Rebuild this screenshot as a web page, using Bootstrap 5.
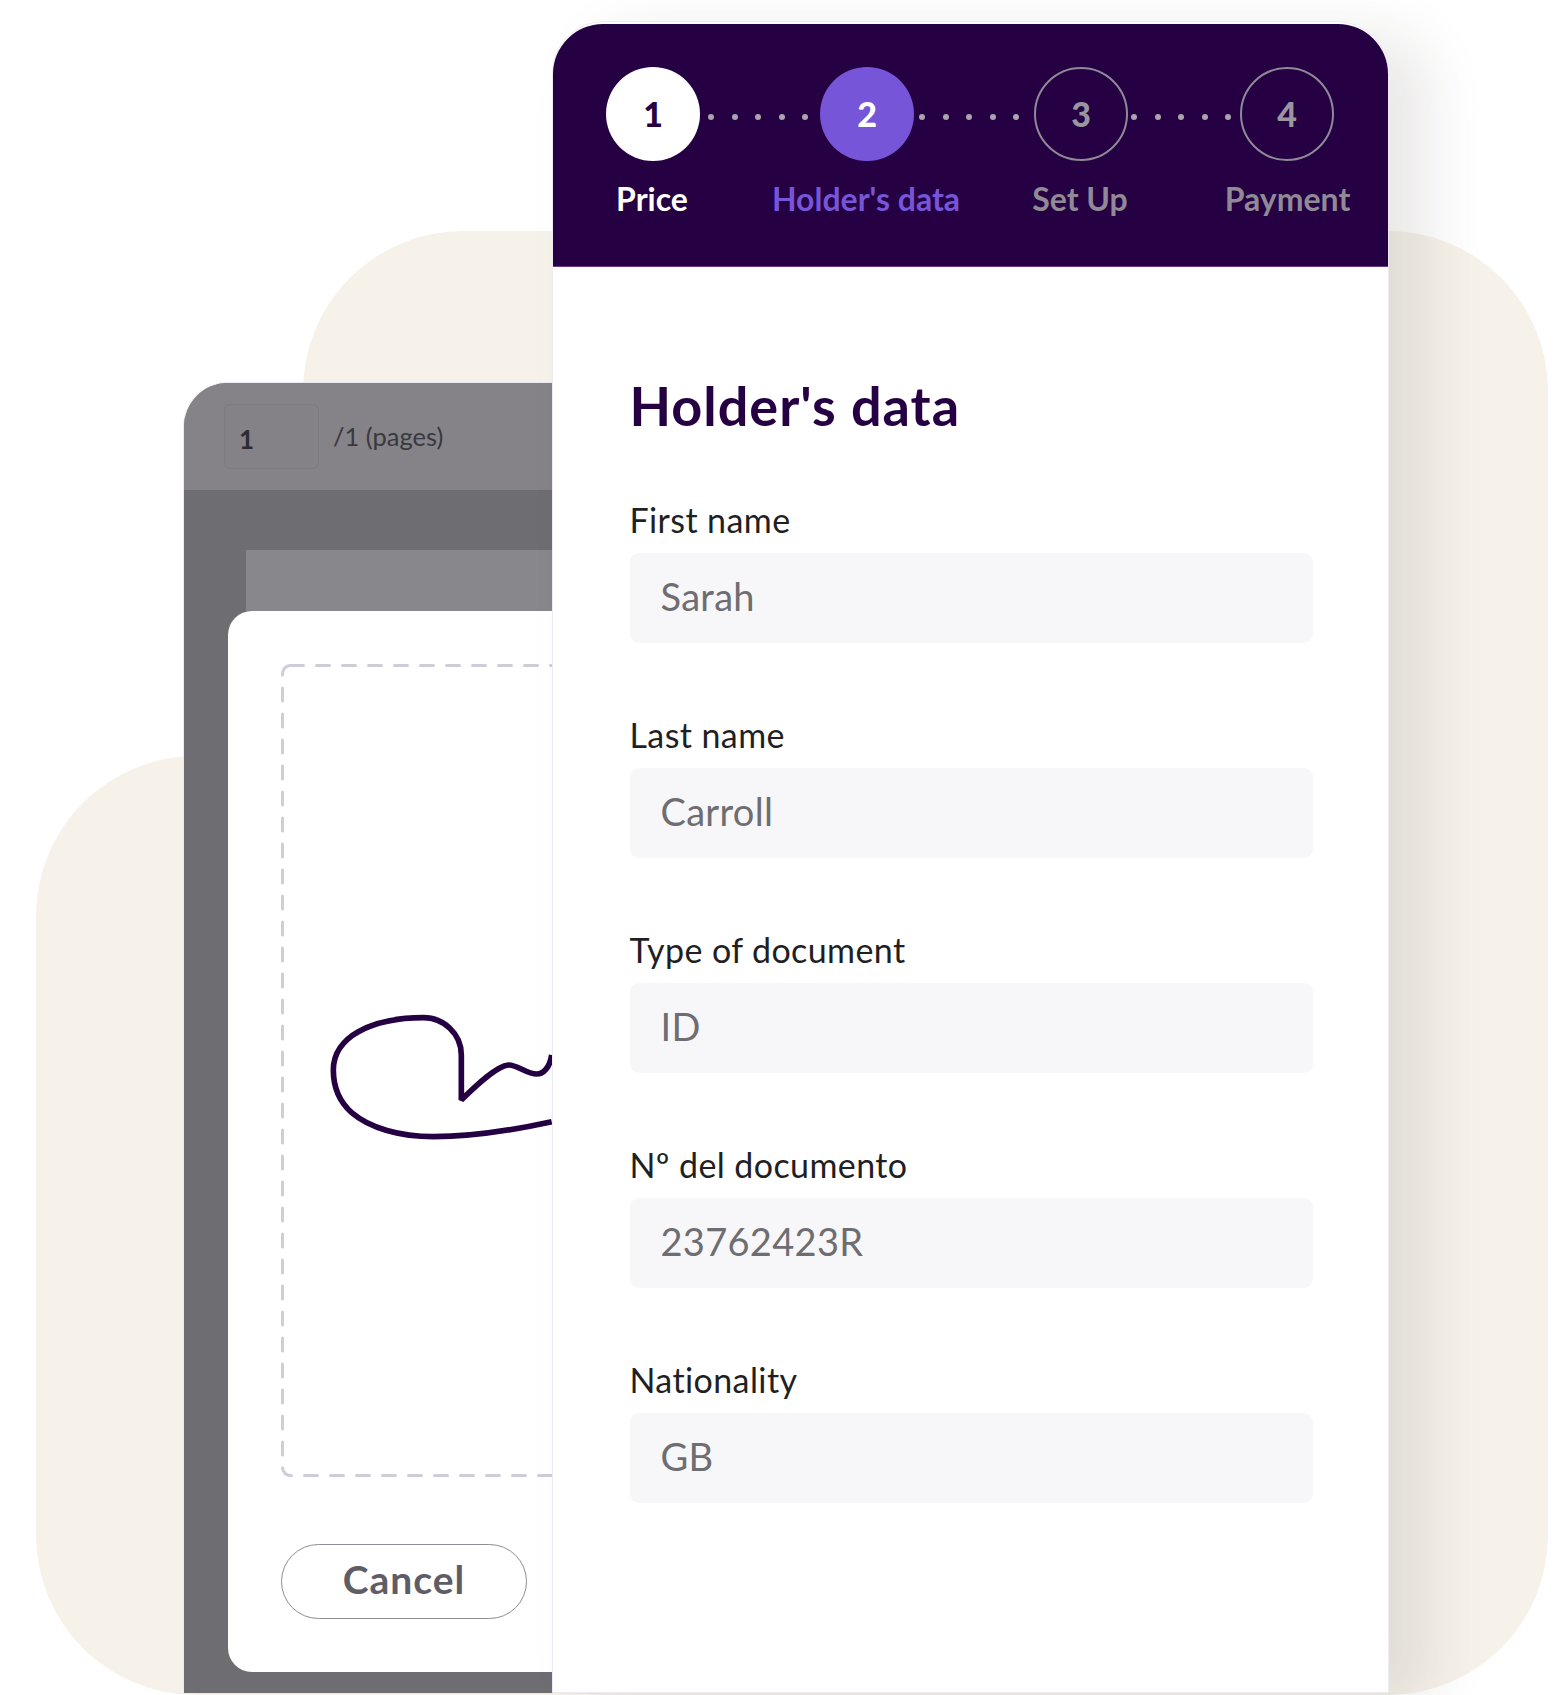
<!DOCTYPE html>
<html lang="en">
<head>
<meta charset="utf-8">
<title>Holder's data</title>
<link href="https://cdn.jsdelivr.net/npm/bootstrap@5.3.0/dist/css/bootstrap.min.css" rel="stylesheet">
<style>
html,body{margin:0;background:#fff}
body{font-family:"Lato","Liberation Sans",sans-serif;font-variant-ligatures:none}
.stage{position:relative;width:1560px;height:1695px;overflow:hidden;background:#fff}
.blob{position:absolute;background:#f6f2ea}
.blob-back{left:303px;top:231px;width:1245px;height:1464px;border-radius:160px}
.blob-low{left:36px;top:756px;width:500px;height:939px;border-radius:160px 0 0 160px}
.doc-panel{position:absolute;left:184px;top:382.5px;width:420px;height:1310.5px;border-radius:44px 0 0 0;overflow:hidden;background:#6e6d72;box-shadow:0 0 0 1px #ecebf3}
.doc-tools{height:107.5px;background:#858388;padding:21.5px 0 0 40px;gap:14px}
.page-box{width:95px;height:65px;background:#848287;border:1.5px solid #7d7b80;border-radius:6px;padding:0 0 0 14px;font-weight:700;font-size:26px;color:#2e2c33;line-height:68px}
.page-count{font-size:25.5px;color:#3a383f;line-height:64px}
.sheet{height:61px;margin:60px 0 0 62px;background:#88878c}
.sign-modal{margin-left:43.5px;width:500px;height:1061px;background:#fff;border-radius:24px 0 0 24px;padding:53px 0 0 53.5px}
.sign-area{display:block;width:320px;height:815px}
.btn-cancel{width:246px;height:75px;margin-top:65px;border:1.5px solid #8e8d94;border-radius:38px;background:#fff;color:#5e5d66;font-weight:700;font-size:39px;letter-spacing:1px;line-height:1;padding:0 0 4px}
.form-panel{position:absolute;left:552px;top:21px;width:837px;height:1672px;border:1.5px solid #ecebf3;border-radius:52px 52px 0 0;background:#fff;padding-top:1.5px;box-shadow:38px 14px 60px rgba(50,40,30,.105)}
.form-panel .card-header{height:243px;background:#250042;border:0;border-bottom:1px solid #6b3b8a;border-radius:50px 50px 0 0;padding:43px 0 0 53px}
.step-dot{width:94px;height:94px;flex:none;border-radius:50%;font-weight:900;font-size:34px;line-height:1}
.step-done{background:#fff;color:#250042}
.step-now{background:#7655d9;color:#fff}
.step-next{border:2px solid #8f8a96;color:#9a95a0}
.link-dots{flex:none;width:120px;padding:6px 0 0 8px;gap:17.6px}
.link-dots-mid{padding-left:5px}
.link-dots-short{width:112px;padding-left:3px}
.link-dots i{display:block;width:6px;height:6px;border-radius:50%;background:#a9a4b0}
.step-labels{display:grid;grid-template-columns:198px 230px 198px 217px;margin:18px 0 0 -53px;font-weight:700;font-size:32px;line-height:40px;text-align:center}
.lbl-done{color:#fff}.lbl-now{color:#7655d9}.lbl-next{color:#8f8a96}
.form-panel .card-body{padding:103px 0 0 76.5px}
.form-title{margin:0;font-weight:700;font-size:54px;letter-spacing:1px;line-height:72px;color:#250042}
.field{height:215px;width:683px}
.field-first{margin-top:55px}
.field-label{display:block;margin:0;font-size:34px;letter-spacing:.4px;line-height:46px;color:#1f1f24;height:56px}
.field .form-control{height:90px;margin:0;background:#f7f7f9;border:0;border-radius:9px;padding:0 0 0 31px;font-size:38px;letter-spacing:.3px;line-height:86px;color:#6e6d72}
</style>
</head>
<body>
<div class="stage">
  <div class="blob blob-back"></div>
  <div class="blob blob-low"></div>

  <div class="doc-panel d-flex flex-column">
    <div class="doc-tools d-flex align-items-start">
      <div class="page-box">1</div>
      <div class="page-count">/1 (pages)</div>
    </div>
    <div class="sheet"></div>
    <div class="sign-modal">
      <svg class="sign-area" viewBox="281 664 320 815" xmlns="http://www.w3.org/2000/svg" aria-label="Signature">
        <rect x="282.5" y="665.5" width="400" height="810" rx="8" fill="none" stroke="#d0ccd8" stroke-width="3" stroke-dasharray="13 13" stroke-linecap="round"/>
        <g transform="translate(300 980) scale(.33333)">
          <path d="M755 425C650 448 520 470 400 470C300 470 210 445 155 398C115 362 100 315 100 270C100 220 130 180 175 155C235 122 310 113 370 113C430 113 484 160 484 225L484 360C530 315 590 258 625 255C650 253 680 282 710 282C730 282 750 262 755 225" fill="none" stroke="#250042" stroke-width="17" stroke-linejoin="bevel"/>
        </g>
      </svg>
      <button type="button" class="btn btn-cancel d-block">Cancel</button>
    </div>
  </div>

  <div class="card form-panel">
    <div class="card-header">
      <div class="d-flex align-items-start">
        <div class="step-dot step-done d-flex align-items-center justify-content-center">1</div>
        <div class="link-dots d-flex align-self-center"><i></i><i></i><i></i><i></i><i></i></div>
        <div class="step-dot step-now d-flex align-items-center justify-content-center">2</div>
        <div class="link-dots link-dots-mid d-flex align-self-center"><i></i><i></i><i></i><i></i><i></i></div>
        <div class="step-dot step-next d-flex align-items-center justify-content-center">3</div>
        <div class="link-dots link-dots-short d-flex align-self-center"><i></i><i></i><i></i><i></i><i></i></div>
        <div class="step-dot step-next d-flex align-items-center justify-content-center">4</div>
      </div>
      <div class="step-labels">
        <div class="lbl-done">Price</div>
        <div class="lbl-now">Holder's data</div>
        <div class="lbl-next">Set Up</div>
        <div class="lbl-next">Payment</div>
      </div>
    </div>
    <div class="card-body">
      <h1 class="form-title">Holder's data</h1>
      <div class="field field-first"><label class="field-label">First name</label><div class="form-control">Sarah</div></div>
      <div class="field"><label class="field-label">Last name</label><div class="form-control">Carroll</div></div>
      <div class="field"><label class="field-label">Type of document</label><div class="form-control">ID</div></div>
      <div class="field"><label class="field-label">Nº del documento</label><div class="form-control">23762423R</div></div>
      <div class="field"><label class="field-label">Nationality</label><div class="form-control">GB</div></div>
    </div>
  </div>
</div>
<script src="https://cdn.jsdelivr.net/npm/bootstrap@5.3.0/dist/js/bootstrap.bundle.min.js"></script>
</body>
</html>
